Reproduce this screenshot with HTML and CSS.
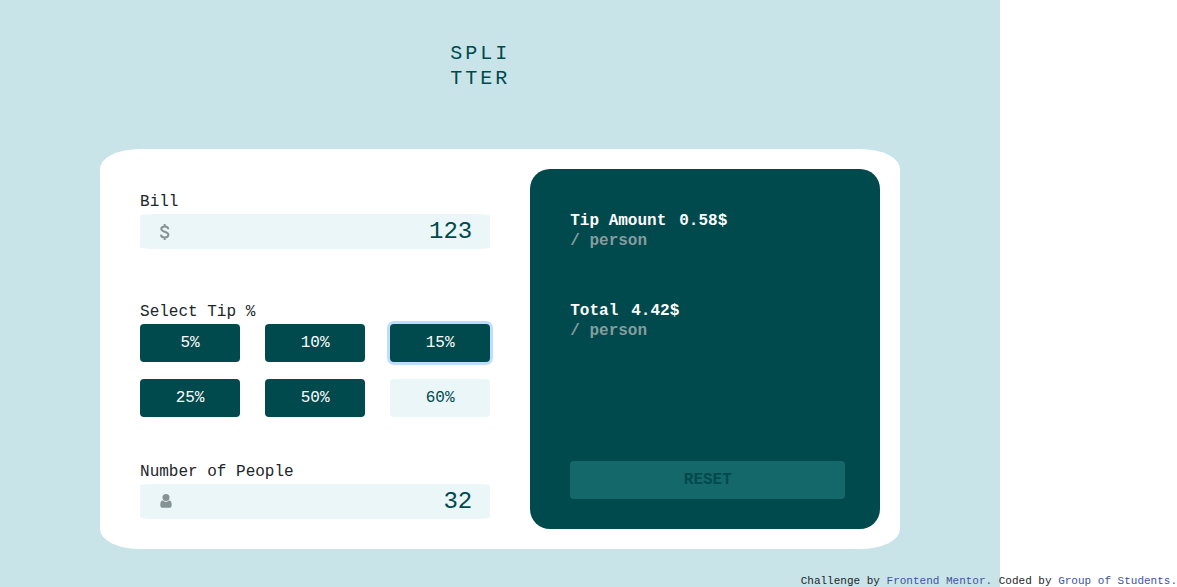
FILE: index.html
```html
<!DOCTYPE html>
<html lang="en">
<head>
  <meta charset="utf-8">
  <meta name="viewport" content="width=device-width, initial-scale=1">
  <title>Splitter</title>
  <link rel="stylesheet" href="styles.css">
</head>
<body>
  <div class="page">
    <h1 class="logo">SPLI<br>TTER</h1>
    <main class="card">
      <form class="inputs">
        <div class="field">
          <label class="label" for="bill">Bill</label>
          <div class="box">
            <svg class="icon" viewBox="0 0 12 16" aria-hidden="true"><path d="M4.700 0v2.500M4.700 13.500v2.500M8.200 5.200C8.200 3.400 6.800 2.500 4.700 2.500S1.300 3.500 1.300 5C1.300 8.300 8.400 7.200 8.400 10.800C8.400 12.500 6.900 13.500 4.700 13.500S1.100 12.500 1 10.600" fill="none" stroke="currentColor" stroke-width="2"/></svg>
            <input class="number" id="bill" type="text" inputmode="decimal" value="123">
          </div>
        </div>
        <fieldset class="tips">
          <legend class="label">Select Tip %</legend>
          <div class="tip-grid">
            <button class="tip" type="button">5%</button>
            <button class="tip" type="button">10%</button>
            <button class="tip tip-active" type="button">15%</button>
            <button class="tip" type="button">25%</button>
            <button class="tip" type="button">50%</button>
            <input class="tip tip-custom" type="text" aria-label="Custom tip" value="60%">
          </div>
        </fieldset>
        <div class="field">
          <label class="label" for="people">Number of People</label>
          <div class="box">
            <svg class="icon" viewBox="0 1 12 16" aria-hidden="true"><circle cx="6" cy="4.500" r="3.500" fill="currentColor"/><path d="M2.900 7.500C4.500 9.200 7.500 9.200 9.100 7.500C11 7.600 11.700 9.300 11.700 12C11.700 13.900 10.900 14.800 9.700 14.800H2.300C1.100 14.800.3 13.900.3 12C.3 9.300 1 7.600 2.900 7.500Z" fill="currentColor"/></svg>
            <input class="number" id="people" type="text" inputmode="numeric" value="32">
          </div>
        </div>
      </form>
      <section class="panel">
        <div class="result">
          <div class="amount"><span>Tip Amount</span><output>0.58$</output></div>
          <div class="per">/ person</div>
        </div>
        <div class="result">
          <div class="amount"><span>Total</span><output>4.42$</output></div>
          <div class="per">/ person</div>
        </div>
        <button class="reset" type="button">RESET</button>
      </section>
    </main>
  </div>
  <footer class="credit">Challenge by <a href="#">Frontend Mentor.</a> Coded by <a href="#">Group of Students.</a></footer>
</body>
</html>
```
FILE: styles.css
```css
* {
  box-sizing: border-box;
}

body {
  margin: 0;
  min-height: 100vh;
  background: linear-gradient(to right, #c9e4e8 85%, #fff 85%);
  color: #212529;
  font: 16px/24px "Courier New", "Liberation Mono", monospace;
}

button,
input {
  font: inherit;
}

.page {
  width: 85%;
  padding-top: 41px;
}

.logo {
  margin: 0 0 58px 45%;
  color: #00494d;
  font-size: 20px;
  font-weight: 400;
  line-height: 25px;
  letter-spacing: 3px;
}

.card {
  display: grid;
  grid-template-columns: repeat(2, minmax(0, 1fr));
  gap: 40px;
  width: 80%;
  margin: 0 auto;
  padding: 20px 20px 20px 40px;
  border-radius: 40px / 20px;
  background: #fff;
}

.inputs {
  display: flex;
  flex-direction: column;
  padding-top: 21px;
}

.label {
  display: block;
  padding: 0;
}

.box {
  display: flex;
  align-items: center;
  height: 35px;
  padding: 0 18px 0 20px;
  border-radius: 5%;
  background: #eaf6f8;
}

.icon {
  flex: none;
  width: 12px;
  height: 16px;
  color: #869394;
}

.number {
  flex: 1;
  min-width: 0;
  padding: 0;
  border: 0;
  background: none;
  color: #00494d;
  font-size: 24px;
  text-align: right;
  outline: 0;
}

.tips {
  min-width: 0;
  margin: 51px 0 43px;
  padding: 0;
  border: 0;
}

.tip-grid {
  display: grid;
  grid-template-columns: repeat(3, minmax(0, 1fr));
  gap: 17px 25px;
}

.tip,
.reset {
  width: 100%;
  height: 38px;
  padding: 0;
  border: 0;
  border-radius: 4px;
  background: #00494d;
  color: #fff;
  text-align: center;
}

.tip-active {
  box-shadow: 0 0 0 3px #bfdeff;
}

.tip-custom {
  background: #eaf6f8;
  color: #00494d;
}

.panel {
  display: flex;
  flex-direction: column;
  gap: 50px;
  min-height: 360px;
  padding: 42px 35px 30px 40px;
  border-radius: 20px;
  background: #00494d;
  line-height: 20px;
}

.amount {
  display: flex;
  gap: 13px;
  color: #fff;
  font-weight: 700;
}

.per {
  color: #869c9e;
  font-weight: 700;
}

.reset {
  margin-top: auto;
  background: #15686a;
  color: #00494d;
  font-weight: 700;
}

.credit {
  margin-top: 26px;
  font-size: 11px;
  line-height: 12px;
  text-align: right;
}

.credit a {
  color: #3e52a3;
  text-decoration: none;
}
```
